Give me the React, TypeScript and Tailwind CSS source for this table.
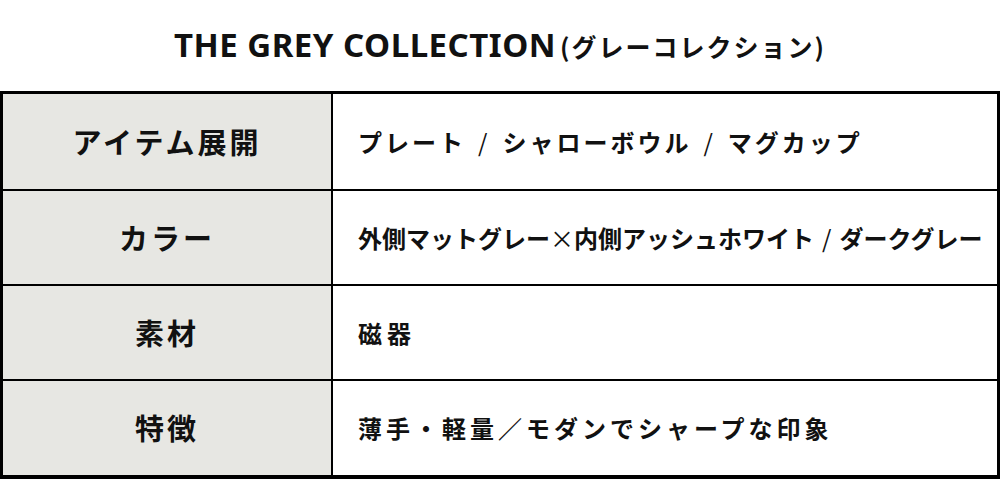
const jp = "font-['Noto_Sans_CJK_JP','Noto_Sans',sans-serif]";

const Slash = () => <span className="font-normal mx-[12px]">/</span>;

const rows = [
  {
    label: 'アイテム展開',
    value: (
      <>
        プレート<Slash />シャローボウル<Slash />マグカップ
      </>
    ),
    track: 'tracking-[3px]',
  },
  {
    label: 'カラー',
    value: (
      <>
        外側マットグレー<span className="font-normal">×</span>内側アッシュホワイト
        <span className="font-normal mx-[8px]">/</span>ダークグレー
      </>
    ),
    track: 'tracking-[0px]',
  },
  { label: '素材', value: '磁器', track: 'tracking-[5px]' },
  { label: '特徴', value: '薄手・軽量／モダンでシャープな印象', track: 'tracking-[4px]' },
];

export default function App() {
  return (
    <div className={`w-[1000px] h-[485px] bg-white text-[#111] overflow-hidden ${jp}`}>
      {/* Title */}
      <div className="h-[91px] flex items-center justify-center pb-[2px]">
        <h1 className="flex items-baseline font-bold">
          <span className="text-[33px] tracking-[0.5px] font-['Noto_Sans',sans-serif]">
            THE GREY COLLECTION
          </span>
          <span className="text-[25px] tracking-[2px] ml-[4px]">(グレーコレクション)</span>
        </h1>
      </div>

      {/* Spec table */}
      <div className="border-x-[3px] border-t-[3px] border-b-4 border-black">
        {rows.map((row, i) => (
          <div
            key={row.label}
            className={`grid grid-cols-[330px_1fr] ${i === 3 ? 'h-[96px]' : 'h-[95px]'} ${i > 0 ? 'border-t-2 border-black' : ''}`}
          >
            <div className="bg-[#e7e7e3] border-r-2 border-black flex items-center justify-center">
              <span className="text-[29px] font-bold tracking-[3px]">{row.label}</span>
            </div>
            <div className="flex items-center pl-[25px]">
              <span className={`text-[24px] font-bold whitespace-nowrap ${row.track}`}>{row.value}</span>
            </div>
          </div>
        ))}
      </div>
    </div>
  );
}
